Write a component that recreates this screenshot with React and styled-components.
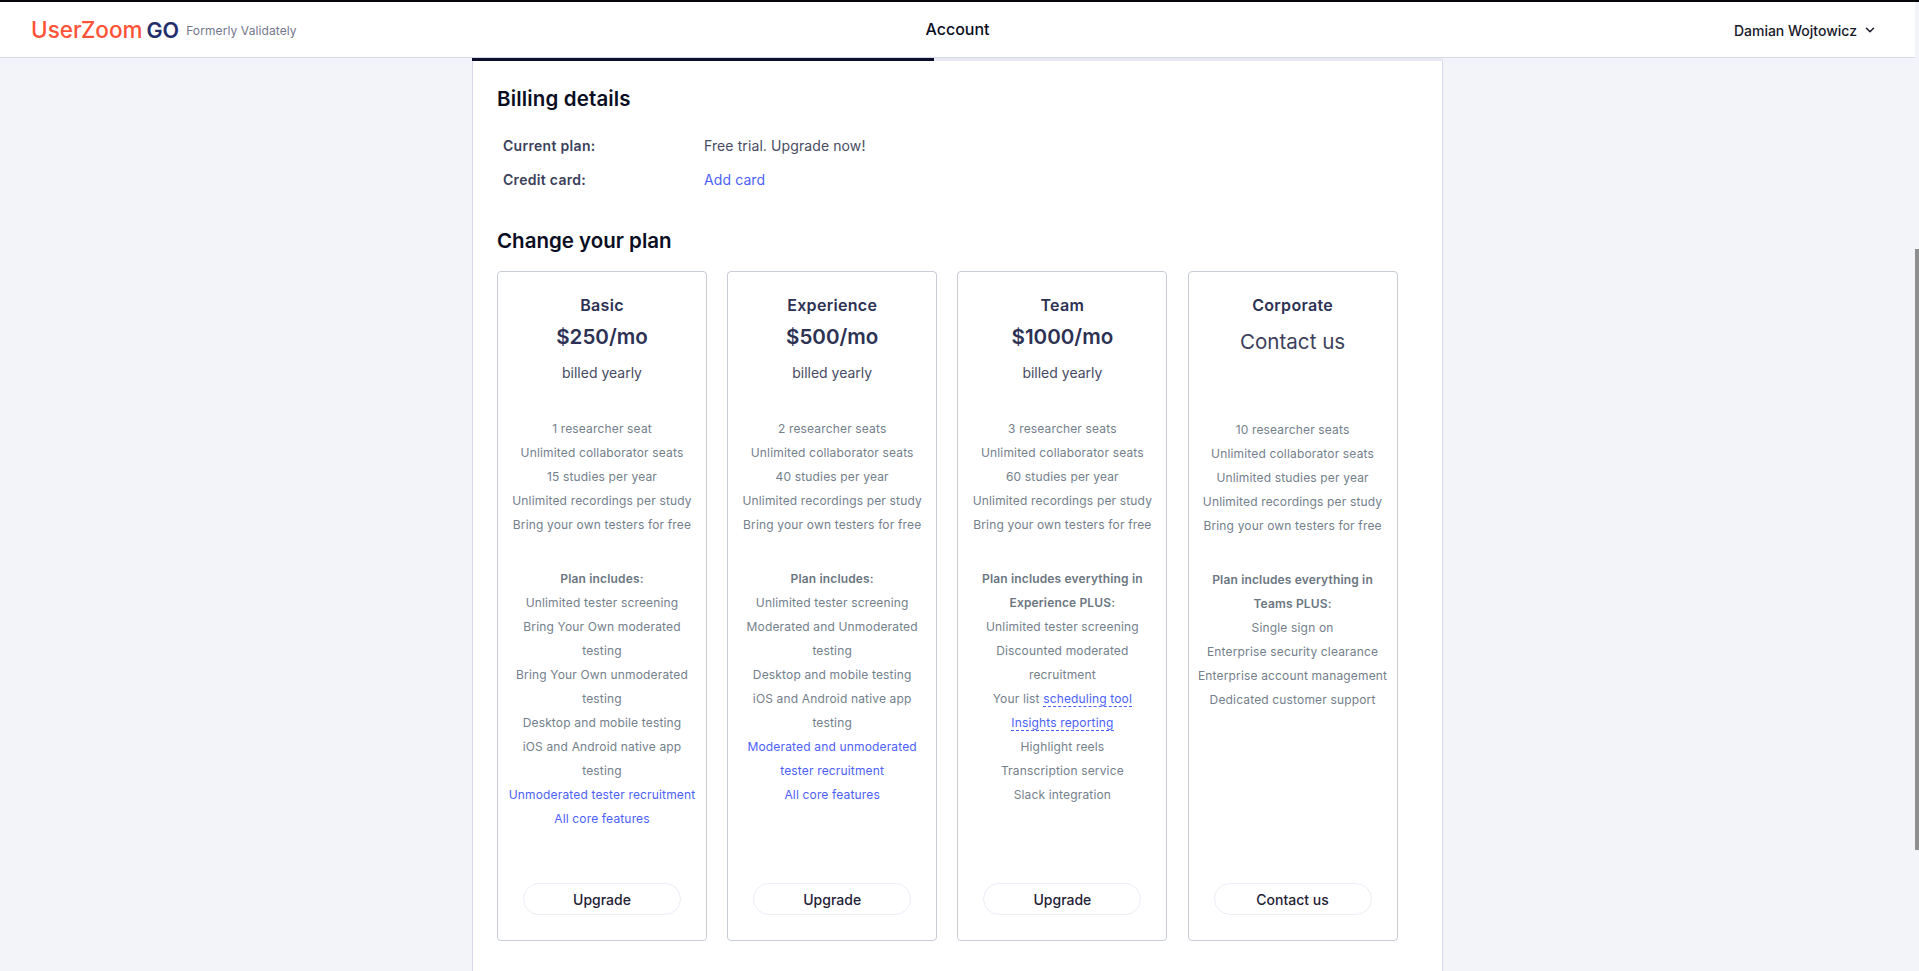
import React from "react";
import styled, { createGlobalStyle } from "styled-components";
import { ChevronDown } from "lucide-react";

const Global = createGlobalStyle`
  html, body { margin: 0; padding: 0; height: 100%; overflow: hidden; background: #f2f4fa; }
  * { box-sizing: border-box; }
  body { font-family: Inter, "Liberation Sans", sans-serif; }
`;

const Page = styled.div`
  position: relative;
  height: 971px;
  overflow: hidden;
  padding-right: 4px;
  display: flex;
  flex-direction: column;
`;
const TopEdge = styled.div`
  height: 2px;
  background: #05070b;
  margin-right: -4px;
`;
const Header = styled.header`
  height: 56px;
  flex: none;
  background: #fff;
  border-bottom: 1px solid #d5d8e8;
  display: grid;
  grid-template-columns: 1fr auto 1fr;
  align-items: center;
  padding: 0 31px;
`;
const Brand = styled.div`
  display: flex;
  align-items: center;
`;
const LogoName = styled.span`
  font-family: Inter, sans-serif;
  font-size: 22.5px;
  font-weight: 500;
  letter-spacing: 0;
  color: #ff5337;
`;
const LogoGo = styled.span`
  font-family: Inter, sans-serif;
  font-size: 21.5px;
  font-weight: 600;
  color: #232d6b;
  margin-left: 4px;
`;
const Tagline = styled.span`
  font-size: 12px;
  color: #74778e;
  letter-spacing: 0.1px;
  margin-left: 7px;
  padding-top: 1px;
`;
const PageTitle = styled.div`
  font-size: 16px;
  font-weight: 500;
  color: #0b0e23;
  padding-bottom: 1px;
`;
const UserMenu = styled.div`
  justify-self: end;
  display: flex;
  align-items: center;
  gap: 6px;
  font-size: 14px;
  font-weight: 500;
  color: #17182a;
  padding-right: 7px;
  padding-top: 1px;
  svg { display: block; }
`;
const Panel = styled.main`
  width: 971px;
  margin-left: 472px;
  flex: 1;
  background: #fff;
  border-left: 1px solid #d5d8e8;
  border-right: 1px solid #d5d8e8;
  position: relative;
  padding: 0 24px;
`;
const Progress = styled.div`
  height: 3px;
  margin: 0 -25px;
  background: #e8eaf3;
  div { height: 100%; background: #0c0e2a; }
`;
const Heading = styled.h2`
  margin: 0;
  font-size: 20.5px;
  line-height: 24px;
  font-weight: 600;
  color: #0b0e23;
`;
const BillingHeading = styled(Heading)`
  padding-top: 26px;
  letter-spacing: 0.15px;
`;
const PlanHeading = styled(Heading)`
  padding-top: 39px;
`;
const Details = styled.dl`
  margin: 25px 0 0;
  display: grid;
  grid-template-columns: 201px 1fr;
  row-gap: 14px;
  padding-left: 6px;
  font-size: 14px;
  line-height: 20px;
`;
const Term = styled.dt`
  font-weight: 600;
  letter-spacing: 0.3px;
  color: #3b3f5a;
`;
const Value = styled.dd`
  margin: 0;
  color: #474b63;
  letter-spacing: 0.1px;
`;
const BlueLink = styled.a`
  color: #4d5ffb;
`;
const Cards = styled.div`
  margin-top: 18px;
  display: grid;
  grid-template-columns: repeat(4, 210px);
  column-gap: 20.2px;
`;
const Card = styled.section`
  height: 670px;
  border: 1px solid #c7ccd6;
  border-radius: 4px;
  padding: 22px 8px 0;
  text-align: center;
  position: relative;
  display: flex;
  flex-direction: column;
  align-items: center;
`;
const PlanName = styled.h3`
  margin: 0;
  font-size: 16px;
  line-height: 22px;
  font-weight: 600;
  letter-spacing: 0.3px;
  color: #2d3153;
`;
const Price = styled.div`
  margin-top: 6px;
  font-size: 20.6px;
  line-height: 30px;
  font-weight: 600;
  color: #2d3153;
`;
const ContactPrice = styled(Price)`
  font-weight: 400;
  color: #3c405c;
  margin-top: 11px;
  line-height: 30px;
`;
const Billed = styled.div`
  margin-top: 11px;
  height: 20px;
  font-size: 14px;
  line-height: 20px;
  color: #474b63;
`;
const Features = styled.ul`
  list-style: none;
  margin: ${p => (p.$second ? "30px" : "34px")} 0 0;
  padding: 0;
  width: 100%;
  font-size: 12px;
  line-height: 24px;
  color: #74808c;
  letter-spacing: 0.16px;
`;
const ContactFeatures = styled(Features)`
  margin-top: ${p => (p.$second ? "30px" : "61px")};
`;
const Strong = styled.li`
  font-weight: 600;
  color: #6b7681;
`;
const Blue = styled.li`
  color: #4d5ffb;
`;
const Dashed = styled.span`
  color: #4d5ffb;
  border-bottom: 1px dashed #4d5ffb;
`;
const CardButton = styled.button`
  position: absolute;
  bottom: 25px;
  left: 25px;
  width: 158px;
  height: 32px;
  background: #fff;
  border: 1px solid #eceef7;
  border-radius: 16px;
  font: 500 14px/30px Inter, sans-serif;
  color: #1f2136;
  padding: 1px 0 0;
`;
const Thumb = styled.div`
  position: absolute;
  top: 249px;
  right: 0;
  width: 4px;
  height: 601px;
  background: #8f8f8f;
`;

const first = ["Unlimited collaborator seats", "Unlimited recordings per study", "Bring your own testers for free"];
const Top = ({ seats, studies }) => (
  <>
    <li>{seats}</li>
    <li>{first[0]}</li>
    <li>{studies}</li>
    <li>{first[1]}</li>
    <li>{first[2]}</li>
  </>
);

export default function App() {
  return (
    <Page>
      <Global />
      <TopEdge />
      <Header>
        <Brand>
          <LogoName>UserZoom</LogoName>
          <LogoGo>GO</LogoGo>
          <Tagline>Formerly Validately</Tagline>
        </Brand>
        <PageTitle>Account</PageTitle>
        <UserMenu>
          Damian Wojtowicz
          <ChevronDown size={14} strokeWidth={2.5} />
        </UserMenu>
      </Header>
      <Panel>
        <Progress>
          <div style={{ width: "47.6%" }} />
        </Progress>
        <BillingHeading>Billing details</BillingHeading>
        <Details>
          <Term>Current plan:</Term>
          <Value>Free trial. Upgrade now!</Value>
          <Term>Credit card:</Term>
          <Value>
            <BlueLink>Add card</BlueLink>
          </Value>
        </Details>
        <PlanHeading>Change your plan</PlanHeading>
        <Cards>
          <Card>
            <PlanName>Basic</PlanName>
            <Price>$250/mo</Price>
            <Billed>billed yearly</Billed>
            <Features>
              <Top seats="1 researcher seat" studies="15 studies per year" />
            </Features>
            <Features $second>
              <Strong>Plan includes:</Strong>
              <li>Unlimited tester screening</li>
              <li>Bring Your Own moderated testing</li>
              <li>Bring Your Own unmoderated testing</li>
              <li>Desktop and mobile testing</li>
              <li>iOS and Android native app testing</li>
              <Blue>Unmoderated tester recruitment</Blue>
              <Blue>All core features</Blue>
            </Features>
            <CardButton>Upgrade</CardButton>
          </Card>
          <Card>
            <PlanName>Experience</PlanName>
            <Price>$500/mo</Price>
            <Billed>billed yearly</Billed>
            <Features>
              <Top seats="2 researcher seats" studies="40 studies per year" />
            </Features>
            <Features $second>
              <Strong>Plan includes:</Strong>
              <li>Unlimited tester screening</li>
              <li>Moderated and Unmoderated testing</li>
              <li>Desktop and mobile testing</li>
              <li>iOS and Android native app testing</li>
              <Blue>Moderated and unmoderated tester recruitment</Blue>
              <Blue>All core features</Blue>
            </Features>
            <CardButton>Upgrade</CardButton>
          </Card>
          <Card>
            <PlanName>Team</PlanName>
            <Price>$1000/mo</Price>
            <Billed>billed yearly</Billed>
            <Features>
              <Top seats="3 researcher seats" studies="60 studies per year" />
            </Features>
            <Features $second>
              <Strong>Plan includes everything in Experience PLUS:</Strong>
              <li>Unlimited tester screening</li>
              <li>Discounted moderated recruitment</li>
              <li>
                Your list <Dashed>scheduling tool</Dashed>
              </li>
              <li>
                <Dashed>Insights reporting</Dashed>
              </li>
              <li>Highlight reels</li>
              <li>Transcription service</li>
              <li>Slack integration</li>
            </Features>
            <CardButton>Upgrade</CardButton>
          </Card>
          <Card>
            <PlanName>Corporate</PlanName>
            <ContactPrice>Contact us</ContactPrice>
            <ContactFeatures>
              <Top seats="10 researcher seats" studies="Unlimited studies per year" />
            </ContactFeatures>
            <ContactFeatures $second>
              <Strong>Plan includes everything in Teams PLUS:</Strong>
              <li>Single sign on</li>
              <li>Enterprise security clearance</li>
              <li>Enterprise account management</li>
              <li>Dedicated customer support</li>
            </ContactFeatures>
            <CardButton>Contact us</CardButton>
          </Card>
        </Cards>
      </Panel>
      <Thumb />
    </Page>
  );
}
